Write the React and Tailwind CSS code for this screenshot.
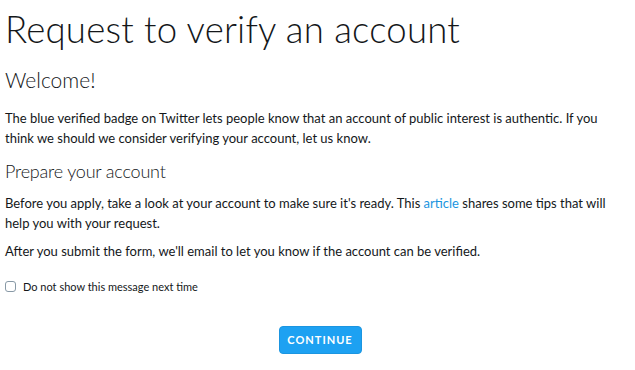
import { useState } from "react";

const App = () => {
    const [hide, setHide] = useState(false);

    return (
        <div className="w-[635px] h-[370px] bg-white text-[#14171a] overflow-hidden" style={{ fontFamily: "Lato, 'Open Sans', sans-serif" }}>
            <div className="pl-[5px]">
                <h1 className="text-[36.6px] font-light leading-none pt-[11px] tracking-[0.2px]">
                    Request to verify an account
                </h1>
                <h2 className="text-[21px] font-light leading-none mt-[21px]">Welcome!</h2>
                <p className="text-[13px] leading-[20px] mt-[18px] pr-[10px]">
                    The blue verified badge on Twitter lets people know that an account of public interest is authentic. If you think we should we consider verifying your account, let us know.
                </p>
                <h2 className="text-[18px] font-light leading-none mt-[14px] tracking-[-0.2px]">Prepare your account</h2>
                <p className="text-[13px] leading-[20px] mt-[13px] pr-[10px]">
                    <span>Before you apply, take a look at your account to make sure it's ready. This </span>
                    <a href="#" className="text-[#1b95e0]">article</a>
                    <span> shares some tips that will</span>
                    <br />
                    <span>help you with your request.</span>
                </p>
                <p className="text-[13px] leading-[20px] mt-[8px]">
                    After you submit the form, we'll email to let you know if the account can be verified.
                </p>
                <label className="flex items-center gap-[7px] mt-[18px] text-[11px]">
                    <input
                        type="checkbox"
                        checked={hide}
                        onChange={(e) => setHide(e.target.checked)}
                        className="w-[11px] h-[11px] m-0 appearance-none border border-[#8899a6] rounded-[3px] bg-white"
                    />
                    Do not show this message next time
                </label>
                <div className="flex justify-center mt-[31px]">
                    <button className="w-[83px] h-[28px] rounded-[4px] bg-[#1da1f2] text-white text-[11px] font-bold tracking-[1px] border border-[#1b95e0]">
                        CONTINUE
                    </button>
                </div>
            </div>
        </div>
    );
};

export default App;
